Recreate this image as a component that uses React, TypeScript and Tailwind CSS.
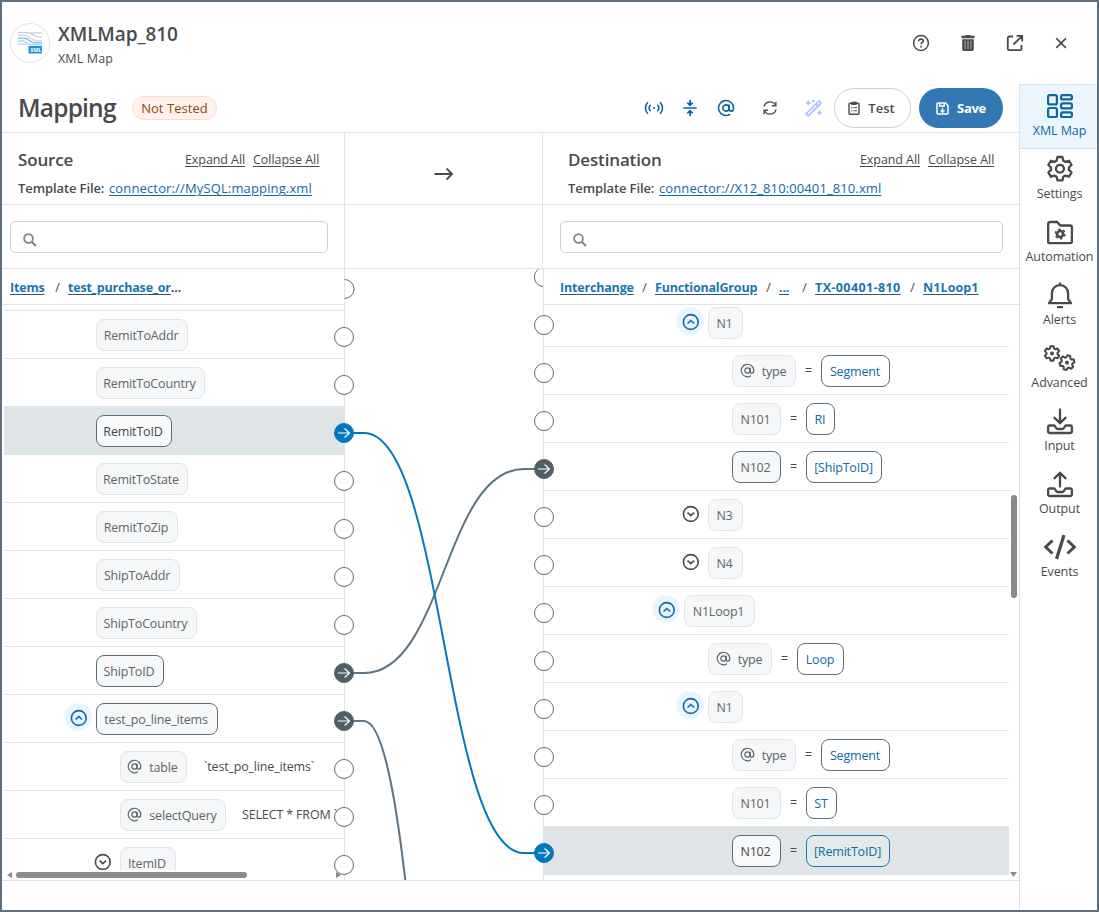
import type { ReactNode } from "react";

type Tone = "plain" | "linked" | "active";

const toneClass: Record<Tone, string> = {
  plain: "border-[#e1e5e8] bg-[#f5f7f9] text-[#5d6668]",
  linked: "border-[#5b6c7a] bg-[#f5f7f9] text-[#5d6668]",
  active: "border-[#5b6c7a] bg-[#f8f9fb] text-[#43484a]",
};

function AtGlyph({ size, className, sw }: { size: number; className?: string; sw: number }) {
  return (
    <svg width={size} height={size} viewBox="0 0 24 24" fill="none" stroke="currentColor" strokeWidth={sw} strokeLinecap="round" className={className}>
      <circle cx="12" cy="12" r="4.2" />
      <path d="M16.200 8v5c0 1.900 1.200 3.200 2.900 3.200S22 14.700 22 12A10 10 0 1 0 17 20.700" />
    </svg>
  );
}

function Toggle({ open }: { open: boolean }) {
  return (
    <svg width="28" height="28" viewBox="0 0 28 28" fill="none" className={open ? "mr-1 shrink-0 text-[#0b6aa5]" : "mr-1 shrink-0 text-[#4a4a4a]"}>
      {open && <circle cx="14" cy="14" r="13.700" fill="#e8f5fd" />}
      <circle cx="14.800" cy="15" r="7.400" stroke="currentColor" strokeWidth="1.600" />
      <path d={open ? "M11.500 16.500l3.300-3 3.300 3" : "M11.500 13.700l3.300 3 3.300-3"} stroke="currentColor" strokeWidth="1.600" />
    </svg>
  );
}

function Pill({ w, at, tone = "plain", children }: { w: string; at?: boolean; tone?: Tone; children: ReactNode }) {
  return (
    <span className={`flex h-8 shrink-0 items-center justify-center rounded-lg border pr-0.5 pt-0.5 ${w} ${toneClass[tone]}`}>
      {at && <AtGlyph size={15} sw={1.900} className="-mt-1 mr-[7px]" />}
      {children}
    </span>
  );
}

function Value({ w, blue, children }: { w: string; blue?: boolean; children: ReactNode }) {
  return (
    <>
      <span className="flex h-8 w-[25px] shrink-0 items-center justify-center text-[#4a4a4a]">=</span>
      <span className={`flex h-8 shrink-0 items-center justify-center rounded-lg border pr-px pt-0.5 text-[#0e6ba3] ${w} ${blue ? "border-[#1878b6] bg-[#e4eaec]" : "border-[#5b6c7a] bg-white"}`}>
        {children}
      </span>
    </>
  );
}

function Row({ indent, active, first, children }: { indent: string; active?: boolean; first?: boolean; children: ReactNode }) {
  return (
    <div className={`flex shrink-0 items-start border-b ${first ? "h-[42px] pt-0.5" : "h-12 pt-2"} ${indent} ${active ? "border-[#dfe5e6] bg-[#dfe5e6]" : "border-[#e0e3e5]"}`}>
      {children}
    </div>
  );
}

const SRC = "pl-[92px]";
const SRC_CHILD = "pl-[116px]";
const DST_LEAF = "pl-[188px]";

function SourceTree() {
  return (
    <div className="ml-0.5 flex h-[565px] flex-col overflow-hidden whitespace-nowrap">
      <div className="h-1.5 shrink-0 border-b border-[#e0e3e5]" />
      <Row indent={SRC}><Pill w="w-[92px]">RemitToAddr</Pill></Row>
      <Row indent={SRC}><Pill w="w-[109px]">RemitToCountry</Pill></Row>
      <div className="-mt-px flex shrink-0 flex-col border-t border-[#dfe5e6]">
        <Row indent={SRC} active><Pill w="w-[76px]" tone="active">RemitToID</Pill></Row>
      </div>
      <Row indent={SRC}><Pill w="w-[92px]">RemitToState</Pill></Row>
      <Row indent={SRC}><Pill w="w-[82px]">RemitToZip</Pill></Row>
      <Row indent={SRC}><Pill w="w-[84px]">ShipToAddr</Pill></Row>
      <Row indent={SRC}><Pill w="w-[101px]">ShipToCountry</Pill></Row>
      <Row indent={SRC}><Pill w="w-[68px]" tone="linked">ShipToID</Pill></Row>
      <Row indent="pl-[60px]"><Toggle open /><Pill w="w-[122px]" tone="linked">test_po_line_items</Pill></Row>
      <Row indent={SRC_CHILD}>
        <Pill w="w-[67px]" at>table</Pill>
        <span className="ml-[17px] mt-[7px] text-[#4a4a4a]">`test_po_line_items`</span>
      </Row>
      <Row indent={SRC_CHILD}>
        <Pill w="w-[106px]" at>selectQuery</Pill>
        <span className="ml-4 mt-[7px] tracking-[-0.15px] text-[#4a4a4a]">SELECT * FROM `</span>
      </Row>
      <Row indent="pl-[84px]"><Toggle open={false} /><Pill w="w-[56px]">ItemID</Pill></Row>
    </div>
  );
}

function DestinationTree() {
  return (
    <div className="flex w-[465px] flex-col overflow-hidden whitespace-nowrap">
      <Row indent="pl-[132px]" first><Toggle open /><Pill w="w-[35px]">N1</Pill></Row>
      <Row indent={DST_LEAF}><Pill w="w-16" at>type</Pill><Value w="w-[69px]">Segment</Value></Row>
      <Row indent={DST_LEAF}><Pill w="w-[49px]">N101</Pill><Value w="w-[29px]">RI</Value></Row>
      <Row indent={DST_LEAF}><Pill w="w-[49px]" tone="linked">N102</Pill><Value w="w-[76px]">[ShipToID]</Value></Row>
      <Row indent="pl-[132px]"><Toggle open={false} /><Pill w="w-[35px]">N3</Pill></Row>
      <Row indent="pl-[132px]"><Toggle open={false} /><Pill w="w-[35px]">N4</Pill></Row>
      <Row indent="pl-[108px]"><Toggle open /><Pill w="w-[71px]">N1Loop1</Pill></Row>
      <Row indent="pl-[164px]"><Pill w="w-16" at>type</Pill><Value w="w-[47px]">Loop</Value></Row>
      <Row indent="pl-[132px]"><Toggle open /><Pill w="w-[35px]">N1</Pill></Row>
      <Row indent={DST_LEAF}><Pill w="w-16" at>type</Pill><Value w="w-[69px]">Segment</Value></Row>
      <Row indent={DST_LEAF}><Pill w="w-[49px]">N101</Pill><Value w="w-[31px]">ST</Value></Row>
      <div className="-mt-px flex shrink-0 flex-col border-t border-[#dfe5e6]">
        <Row indent={DST_LEAF} active><Pill w="w-[49px]" tone="active">N102</Pill><Value w="w-[84px]" blue>[RemitToID]</Value></Row>
      </div>
    </div>
  );
}

function Port({ x, y, fill }: { x: number; y: number; fill?: string }) {
  return (
    <g>
      <circle cx={x} cy={y} r="9.500" fill={fill ?? "#fff"} stroke={fill ?? "#5f6b6e"} strokeWidth="1" />
      {fill && <path d={`M${x - 6} ${y}h11M${x + 0.5} ${y - 4.5}l5 4.500-5 4.500`} fill="none" stroke="#fff" strokeWidth="1.200" />}
    </g>
  );
}

function Links() {
  const left = Array.from({ length: 12 }, (_, i) => 337 + i * 48);
  const right = Array.from({ length: 12 }, (_, i) => 325 + i * 48);
  const blue = "#0478be";
  const slate = "#4f6067";
  return (
    <svg width="220" height="611" viewBox="334 269 220 611" fill="none" className="pointer-events-none absolute left-[332px] top-0">
      <path d="M344 673H364C444 673 444 469 524 469H544" stroke="#5f7380" strokeWidth="2" />
      <path d="M344 721H364C444 721 444 2120 524 2120" stroke="#5f7380" strokeWidth="2" />
      <path d="M344 433H364C444 433 444 853 524 853H544" stroke={blue} strokeWidth="2" />
      <path d="M344.500 279.500A9.500 9.500 0 0 1 344.500 298.500" stroke="#5f6b6e" />
      <path d="M538.500 269.300A9.500 9.500 0 0 0 543 286.500" stroke="#5f6b6e" />
      {left.map((y) => <Port key={y} x={344} y={y} fill={y === 433 ? blue : y === 673 || y === 721 ? slate : undefined} />)}
      {right.map((y) => <Port key={y} x={544} y={y} fill={y === 853 ? blue : y === 469 ? slate : undefined} />)}
    </svg>
  );
}

function PanelHead({ title, file, fileTracking, className }: { title: string; file: string; fileTracking: string; className: string }) {
  return (
    <div className={`flex h-[71px] flex-col whitespace-nowrap text-[#4a4a4a] ${className}`}>
      <div className="mt-[15px] flex h-6 items-center justify-between">
        <h2 className="text-[17px] font-semibold tracking-[-0.15px]">{title}</h2>
        <div className="flex gap-2 text-[12.500px] underline underline-offset-2">
          <span className="w-[60px] tracking-[-0.08px]">Expand All</span>
          <span className="w-[67px] tracking-[-0.04px]">Collapse All</span>
        </div>
      </div>
      <div className="mt-[7px] flex h-5 items-center text-[13px]">
        <span className="w-[91px] font-semibold tracking-[-0.1px]">Template File:</span>
        <span className={`text-[#0f6aa2] underline underline-offset-2 ${fileTracking}`}>{file}</span>
      </div>
    </div>
  );
}

function Search() {
  return (
    <div className="flex h-8 flex-1 items-center rounded-[5px] border border-[#ced3d6] pl-3 pt-[6px]">
      <svg width="14" height="14" viewBox="0 0 14 14" fill="none" stroke="#7d8488" strokeWidth="1.700">
        <circle cx="5.500" cy="5.500" r="4.400" />
        <path d="M8.700 8.700l4.300 4.300" strokeWidth="2" />
      </svg>
    </div>
  );
}

function Crumb({ w, last, children }: { w: string; last?: boolean; children: ReactNode }) {
  return (
    <>
      <span className={`shrink-0 text-[#1677ad] underline decoration-[#37586b] underline-offset-2 ${w}`}>{children}</span>
      {!last && <span className="w-[22px] shrink-0 pl-px text-center font-normal text-[#4a4a4a]">/</span>}
    </>
  );
}

const gear = "M11.600 1.500h4.800l.9 3.600 2.200 1.200 3.500-1.100 2.500 4.200-2.600 2.500v2.400l2.600 2.500-2.500 4.200-3.500-1.100-2.200 1.200-.9 3.600h-4.800l-.9-3.600-2.200-1.200L5 21l-2.500-4.200 2.600-2.500v-2.400L2.500 9.400 5 5.200l3.500 1.100 2.200-1.200z";

const tray = "M10 19.500H5.500A1.400 1.400 0 0 0 4.100 21v4.500A1.400 1.400 0 0 0 5.500 27h21a1.400 1.400 0 0 0 1.400-1.500V21a1.400 1.400 0 0 0-1.400-1.500H22c-1.500 0-1.500 3.500-3.500 3.500h-5c-2 0-2-3.500-3.500-3.500z";

const nav: { label: string; icon: ReactNode }[] = [
  {
    label: "XML Map",
    icon: <g strokeWidth="2.200"><rect x="4.100" y="4.100" width="8.800" height="9.300" rx="1.500" /><rect x="4.100" y="17" width="8.800" height="9" rx="1.500" /><rect x="17.100" y="4.100" width="10.800" height="4.300" rx="1.500" /><rect x="17.100" y="12.400" width="10.800" height="5" rx="1.500" /><rect x="17.100" y="21.400" width="10.800" height="4.600" rx="1.500" /></g>,
  },
  {
    label: "Settings",
    icon: <g transform="translate(1.800 1.500) scale(1.010)" strokeWidth="2.300" strokeLinejoin="round"><path d={gear} /><circle cx="14" cy="13.100" r="3.900" /></g>,
  },
  {
    label: "Automation",
    icon: <g><path d="M4.200 24.700V7a2 2 0 0 1 2-2h7l3 3.500h9.700a2 2 0 0 1 2 2v14.200a1.500 1.500 0 0 1-1.500 1.500H5.700A1.500 1.500 0 0 1 4.200 24.700z" strokeWidth="2.300" /><circle cx="16.100" cy="17" r="3" strokeWidth="2.600" /><circle cx="16.100" cy="17" r="4.800" strokeWidth="1.500" strokeDasharray="2.500 2.530" /></g>,
  },
  {
    label: "Alerts",
    icon: <g strokeWidth="2.300"><path d="M5 23.200h22l-2.900-4.200v-5.800c0-4.500-3.400-8-8.100-8s-8.100 3.500-8.100 8V19z" strokeLinejoin="round" /><path d="M16 2.500v3M13 27.200h6" /></g>,
  },
  {
    label: "Advanced",
    icon: <g strokeLinejoin="round"><g transform="translate(-.700 2.300) scale(.62)" strokeWidth="3.300"><path d={gear} /><circle cx="14" cy="13.100" r="1.600" fill="currentColor" /></g><g transform="translate(14.300 11.500) scale(.62) rotate(15 14 13)" strokeWidth="3.300"><path d={gear} /><circle cx="14" cy="13.100" r="1.600" fill="currentColor" /></g></g>,
  },
  {
    label: "Input",
    icon: <g strokeWidth="2.300"><path d="M16 2.500v14M9.800 11.200l6.200 6 6.200-6" /><path d={tray} /></g>,
  },
  {
    label: "Output",
    icon: <g strokeWidth="2.300"><path d="M16 18.500V4M9.800 9.800l6.200-6 6.200 6" /><path d={tray} /></g>,
  },
  {
    label: "Events",
    icon: <g strokeWidth="3"><path d="M8.500 8.500L1.700 15l6.800 6.500M23.500 8.500l6.800 6.500-6.800 6.500" /><path d="M20 3l-7.500 24" strokeWidth="3.200" /></g>,
  },
];

function Sidebar() {
  return (
    <nav className="flex w-[78px] flex-col border-l border-t border-[#dde2e4] text-[12.500px] tracking-[-0.1px] text-[#4a4a4a]">
      {nav.map((n, i) => (
        <div key={n.label} className={`flex flex-col items-center pl-[2px] ${i === 0 ? "h-16 border-b border-[#d5dde2] bg-[#eaf5fd] pt-[6px] text-[#0f679c]" : "h-[63px] pt-[5px]"}`}>
          <svg width="32" height="30" viewBox="0 0 32 30" fill="none" stroke="currentColor">{n.icon}</svg>
          <span className="h-5 whitespace-nowrap leading-5">{n.label}</span>
        </div>
      ))}
    </nav>
  );
}

function Header() {
  return (
    <header className="flex h-[82px] shrink-0 items-start text-[#4a4a4a]">
      <svg width="40" height="40" viewBox="0 0 40 40" fill="none" className="ml-2 mt-[21px]">
        <circle cx="20" cy="20" r="19.500" stroke="#e1e5e7" />
        <g strokeWidth="1.300">
          <path d="M8 9.600h9.500c4.500 0 6 4.200 11 4.200H32M8 12.400h7c4 0 6 5.400 12 5.400h5M20 10h12" stroke="#cfd2de" />
          <path d="M8 15.200h6.500c4.500 0 5 4.600 10 4.600H32" stroke="#6fbfe6" />
          <path d="M8 18h5c3 0 3.500 3.600 8 3.600h11M8 21.200h9" stroke="#b4d6e8" />
        </g>
        <rect x="18.500" y="23" width="13.500" height="7.500" fill="#159ad6" />
        <text x="20.300" y="28.700" fontSize="5" fontWeight="700" fill="#fff" fontFamily="Open Sans">XML</text>
      </svg>
      <div className="ml-2 mt-[18px] flex flex-1 flex-col">
        <h1 className="h-7 text-[19px] font-semibold leading-7 tracking-[-0.1px]">XMLMap_810</h1>
        <span className="mt-px text-[12.500px] leading-5 tracking-[0.15px]">XML Map</span>
      </div>
      <div className="mr-[26px] mt-[32px] flex gap-[29px]">
        <svg width="18" height="18" viewBox="0 0 18 18" fill="none" stroke="currentColor" strokeWidth="1.500">
          <circle cx="9" cy="9" r="7.400" />
          <path d="M6.700 7.200c0-1.300 1-2.100 2.300-2.100s2.300.8 2.300 1.900c0 1.700-2.300 1.700-2.300 3.300M9 11.700v1.700" strokeWidth="1.600" />
        </svg>
        <svg width="18" height="18" viewBox="0 0 18 18">
          <path d="M2.500 1.800h4L7 1h4l.5.800h4v2.400h-13z" fill="currentColor" />
          <path d="M3.200 5.200h11.600V15.500A1.600 1.600 0 0 1 13.200 17H4.800A1.600 1.600 0 0 1 3.200 15.500z" fill="currentColor" />
          <path d="M6.100 6.800v8.400M9 6.800v8.400M11.900 6.800v8.400" stroke="#a9a9a9" strokeWidth="1" />
        </svg>
        <svg width="18" height="18" viewBox="0 0 18 18" fill="none" stroke="currentColor" strokeWidth="1.800">
          <path d="M7 2.500H3.300A1.500 1.500 0 0 0 1.800 4v10.700a1.500 1.500 0 0 0 1.500 1.500H14a1.500 1.500 0 0 0 1.500-1.500V11M7.500 10.500L15.500 2.500M10.500 1.900h5.700v5.700" />
        </svg>
        <svg width="18" height="18" viewBox="0 0 18 18" fill="none" stroke="currentColor" strokeWidth="1.700">
          <path d="M3.300 4.300l9.600 9.500M12.900 4.300l-9.600 9.500" />
        </svg>
      </div>
    </header>
  );
}

function Toolbar() {
  return (
    <div className="flex h-12 items-center text-[#4a4a4a]">
      <h2 className="ml-4 w-[114px] text-[24.500px] font-semibold leading-8 tracking-[-0.8px]">Mapping</h2>
      <span className="flex h-6 w-[85px] items-center justify-center rounded-full border border-[#fbdccb] bg-[#fff1ec] pt-px text-[13px] tracking-[0.05px] text-[#8c4a10]">Not Tested</span>
      <div className="ml-auto flex items-center text-[#0b669e]">
        <svg width="20" height="18" viewBox="0 0 20 18" fill="none" stroke="currentColor" strokeWidth="1.600" strokeLinecap="round" className="mr-4">
          <path d="M3.600 3.700C.8 6.500.8 11.500 3.600 14.300M6.300 6.300c-1.400 1.600-1.400 3.800 0 5.400M16.400 3.700c2.800 2.800 2.800 7.800 0 10.600M13.700 6.300c1.400 1.600 1.400 3.800 0 5.400" />
          <circle cx="10" cy="9" r="1.100" fill="currentColor" stroke="none" />
        </svg>
        <svg width="20" height="18" viewBox="0 0 20 18" fill="none" stroke="currentColor" strokeWidth="1.700" className="mr-4">
          <path d="M3.300 9h13.400M10 1v5M10 17v-5M7.300 3.700L10 6.300l2.700-2.600M7.300 14.300L10 11.700l2.700 2.600" />
        </svg>
        <AtGlyph size={18} sw={2.100} className="ml-px mr-[27px]" />
        <svg width="16" height="16" viewBox="0 0 16 16" fill="none" stroke="#4f5657" strokeWidth="1.400" className="mr-[27px]">
          <path d="M2 6.700A6.100 6.100 0 0 1 13.500 5.500M14 9.300A6.100 6.100 0 0 1 2.500 10.500M13.900 1.800v4h-4M2.100 14.200v-4h4" />
        </svg>
        <svg width="18" height="18" viewBox="0 0 18 18" fill="none" stroke="#a5bdf6" strokeWidth="1.500" className="mr-[11px]">
          <path d="M1.600 14.300L13.400 2.500a1 1 0 0 1 1.400 0l.7.700a1 1 0 0 1 0 1.400L3.700 16.400a1 1 0 0 1-1.400 0l-.7-.7a1 1 0 0 1 0-1.400zM11 5l2 2" />
          <path d="M3.200 1.500v5M.7 4h5M14.500 11.300v5M12 13.800h5M8.200 .8v2.400M7 2h2.400" strokeWidth="1.300" />
        </svg>
        <button className="mr-2 flex h-10 w-[77px] items-center justify-center gap-2 rounded-full border border-[#ccd2d4] pr-0.5 pt-px text-[13px] font-semibold text-[#4a4a4a]">
          <svg width="12" height="14" viewBox="0 0 12 14" fill="none" stroke="currentColor" strokeWidth="1.400" className="-mt-px">
            <rect x="1" y="2.200" width="10" height="11" rx="1" />
            <path d="M3.700 1.200h4.600v2.300H3.700z" fill="currentColor" strokeWidth="1" />
            <path d="M3 6.700h1.400M5.500 6.700h3.600M3 9.800h1.400M5.500 9.800h3.600" strokeWidth="1" />
          </svg>
          Test
        </button>
        <button className="mr-4 flex h-10 w-[84px] items-center justify-center gap-2 rounded-full bg-[#3178b5] pt-px text-[13px] font-bold tracking-[-0.3px] text-white">
          <svg width="13" height="13" viewBox="0 0 13 13" fill="none" stroke="currentColor" strokeWidth="1.500" className="-mt-px">
            <path d="M1 2a1 1 0 0 1 1-1h7.500L12 3.500V11a1 1 0 0 1-1 1H2a1 1 0 0 1-1-1zM3.700 1v3h4.600V1" />
            <path d="M6.500 5.800v4.400M4.500 8.300l2 2 2-2" strokeWidth="1.300" />
          </svg>
          Save
        </button>
      </div>
    </div>
  );
}

export default function App() {
  return (
    <div className="flex h-[912px] w-[1099px] flex-col overflow-hidden border-2 border-[#5f6f7d] bg-white font-['Open_Sans','Noto_Sans',sans-serif]">
      <Header />
      <div className="flex min-h-0 flex-1">
        <main className="flex w-[1017px] flex-col">
          <Toolbar />
          <div className="flex h-[73px] border-y border-[#e0e3e5]">
            <PanelHead title="Source" file="connector://MySQL:mapping.xml" fileTracking="tracking-[0.14px]" className="w-[343px] border-r border-[#e0e3e5] pl-4 pr-6" />
            <div className="flex w-[197px] items-center justify-center text-[#4a4a4a]">
              <svg width="20" height="14" viewBox="0 0 20 14" fill="none" stroke="currentColor" strokeWidth="1.900" className="mt-[10px]">
                <path d="M.5 7h17.500M12.600 1.500L18 7l-5.400 5.500" />
              </svg>
            </div>
            <PanelHead title="Destination" file="connector://X12_810:00401_810.xml" fileTracking="tracking-[0.11px]" className="w-[477px] border-l border-[#e0e3e5] pl-[25px] pr-6" />
          </div>
          <div className="flex h-16 border-b border-[#e0e3e5]">
            <div className="flex w-[343px] items-center border-r border-[#e0e3e5] pl-2 pr-4"><Search /></div>
            <div className="w-[197px]" />
            <div className="flex w-[477px] items-center border-l border-[#e0e3e5] pl-[17px] pr-4"><Search /></div>
          </div>
          <div className="relative flex h-[611px] text-[12.500px] tracking-[-0.18px]">
            <section className="flex w-[343px] flex-col border-r border-[#e0e3e5]">
              <div className="flex h-9 items-center whitespace-nowrap border-b border-[#e0e3e5] pl-2 pt-[3px] font-bold">
                <Crumb w="w-[36px]">Items</Crumb>
                <Crumb w="" last>test_purchase_or</Crumb>
                <span className="text-[#4a4a4a]">...</span>
              </div>
              <SourceTree />
              <div className="flex h-[10px] items-center pl-[5px] pr-[3px]">
                <svg width="5" height="8" viewBox="0 0 5 8"><path d="M5 1v6L0 4z" fill="#8a8a8a" /></svg>
                <div className="ml-1 h-1.5 w-[231px] rounded-full bg-[#8b8b8b]" />
                <svg width="5" height="8" viewBox="0 0 5 8" className="ml-auto"><path d="M0 1v6l5-3z" fill="#8a8a8a" /></svg>
              </div>
            </section>
            <div className="w-[198px]" />
            <section className="flex w-[476px] flex-col border-l border-[#e0e3e5]">
              <div className="flex h-9 items-center whitespace-nowrap border-b border-[#e0e3e5] pl-4 pt-[3px] font-bold">
                <Crumb w="w-[73px]">Interchange</Crumb>
                <Crumb w="w-[102px]">FunctionalGroup</Crumb>
                <Crumb w="w-[14px]">...</Crumb>
                <Crumb w="w-[86px] tracking-[0.4px]">TX-00401-810</Crumb>
                <Crumb w="w-[56px] tracking-[0.1px]" last>N1Loop1</Crumb>
              </div>
              <div className="flex min-h-0 flex-1">
                <DestinationTree />
                <div className="flex w-[9px] flex-col items-center justify-between pb-[3px] pt-[190px]">
                  <div className="h-[103px] w-1.5 rounded-full bg-[#8b8b8b]" />
                  <svg width="7" height="5" viewBox="0 0 7 5"><path d="M0 0h7L3.500 5z" fill="#8a8a8a" /></svg>
                </div>
              </div>
            </section>
            <Links />
          </div>
          <div className="border-t border-[#e0e3e5]" />
        </main>
        <Sidebar />
      </div>
    </div>
  );
}
